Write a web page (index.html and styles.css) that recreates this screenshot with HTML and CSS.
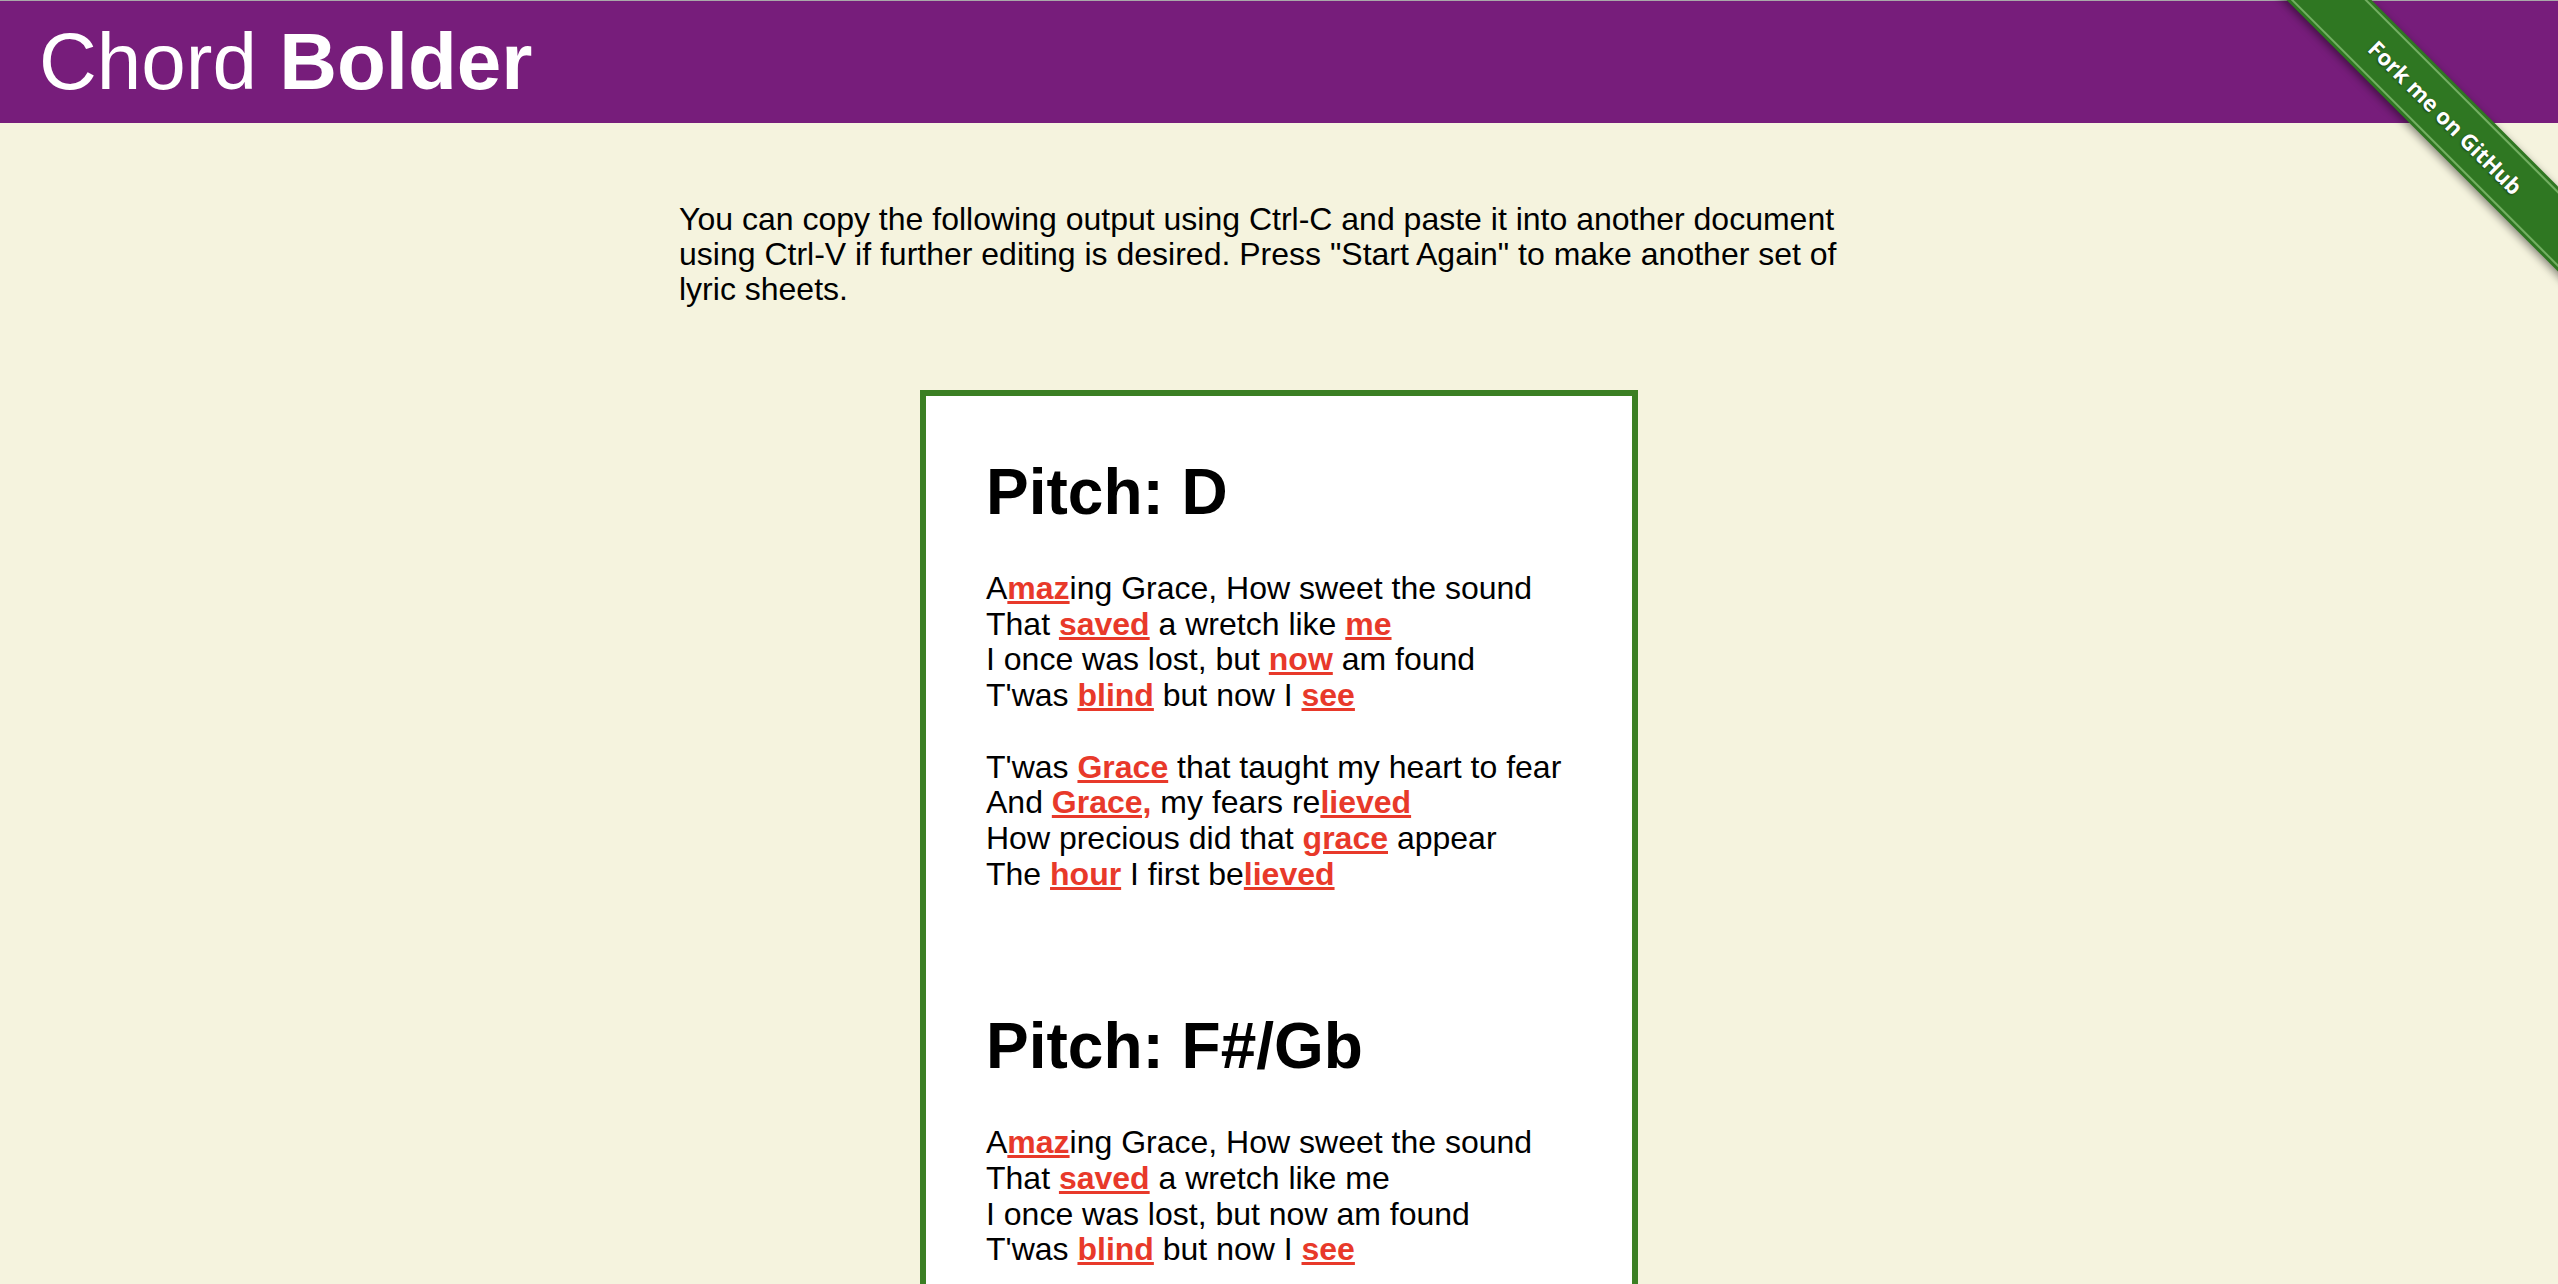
FILE: index.html
```html
<!DOCTYPE html>
<html lang="en">
<head>
<meta charset="utf-8">
<title>Chord Bolder</title>
<link rel="stylesheet" href="styles.css">
</head>
<body>
<header class="site-header">
  <h1 class="brand">Chord <b>Bolder</b></h1>
</header>
<a class="ribbon" href="#"><span class="ribbon-band">Fork me on GitHub</span></a>
<main class="content">
  <p class="intro">You can copy the following output using Ctrl-C and paste it into another document using Ctrl-V if further editing is desired. Press "Start Again" to make another set of lyric sheets.</p>
  <div class="sheet">
    <section class="song">
      <h1 class="pitch">Pitch: D</h1>
      <div class="lyrics">
        <div class="line">A<span class="hl">maz</span>ing Grace, How sweet the sound</div>
        <div class="line">That <span class="hl">saved</span> a wretch like <span class="hl">me</span></div>
        <div class="line">I once was lost, but <span class="hl">now</span> am found</div>
        <div class="line">T'was <span class="hl">blind</span> but now I <span class="hl">see</span></div>
        <div class="line blank">&nbsp;</div>
        <div class="line">T'was <span class="hl">Grace</span> that taught my heart to fear</div>
        <div class="line">And <span class="hl">Grace,</span> my fears re<span class="hl">lieved</span></div>
        <div class="line">How precious did that <span class="hl">grace</span> appear</div>
        <div class="line">The <span class="hl">hour</span> I first be<span class="hl">lieved</span></div>
      </div>
    </section>
    <section class="song">
      <h1 class="pitch">Pitch: F#/Gb</h1>
      <div class="lyrics">
        <div class="line">A<span class="hl">maz</span>ing Grace, How sweet the sound</div>
        <div class="line">That <span class="hl">saved</span> a wretch like me</div>
        <div class="line">I once was lost, but now am found</div>
        <div class="line">T'was <span class="hl">blind</span> but now I <span class="hl">see</span></div>
        <div class="line blank">&nbsp;</div>
        <div class="line">T'was <span class="hl">Grace</span> that taught my heart to fear</div>
        <div class="line">And <span class="hl">Grace,</span> my fears re<span class="hl">lieved</span></div>
        <div class="line">How precious did that <span class="hl">grace</span> appear</div>
        <div class="line">The <span class="hl">hour</span> I first be<span class="hl">lieved</span></div>
      </div>
    </section>
  </div>
</main>
</body>
</html>
```
FILE: styles.css
```css
html, body {
  margin: 0;
  padding: 0;
}

body {
  background: #f5f3de;
  color: #000;
  font-family: "Liberation Sans", Arial, sans-serif;
  font-size: 32px;
  overflow: hidden;
}

.site-header {
  background: #771d7b;
  border-top: 1px solid #a9a9a9;
  padding: 15px 39px;
}

.brand {
  margin: 0;
  font-size: 80px;
  line-height: 92px;
  font-weight: normal;
  color: #fff;
}

.brand b {
  font-weight: bold;
}

.ribbon {
  position: absolute;
  top: 0;
  right: 0;
  width: 300px;
  height: 300px;
  overflow: hidden;
  text-decoration: none;
}

.ribbon-band {
  position: absolute;
  left: -22px;
  top: 87px;
  width: 420px;
  height: 60px;
  box-sizing: border-box;
  transform: rotate(45deg);
  background: #2f7722;
  color: #fff;
  font-family: "Open Sans", "DejaVu Sans", sans-serif;
  font-weight: 700;
  font-size: 22px;
  line-height: 60px;
  text-align: center;
  text-shadow: 0 1px 2px rgba(0, 0, 0, 0.5);
  box-shadow: 0 3px 8px rgba(0, 0, 0, 0.45);
}

.ribbon-band::before,
.ribbon-band::after {
  content: "";
  position: absolute;
  left: 0;
  right: 0;
  height: 2px;
  background: rgba(170, 220, 150, 0.55);
}

.ribbon-band::before {
  top: 3px;
}

.ribbon-band::after {
  bottom: 3px;
}

.content {
  width: 1200px;
  margin: 0 auto;
  padding-top: 79px;
}

.intro {
  margin: 0 0 83px;
  line-height: 35px;
}

.sheet {
  width: 718px;
  box-sizing: border-box;
  margin: 0 auto;
  background: #fff;
  border: 6px solid #3b7f23;
  padding: 16px 60px 0;
}

.pitch {
  margin: 43px 0 42px;
  font-size: 64px;
  font-weight: bold;
  line-height: normal;
}

.lyrics {
  line-height: 35.7px;
  padding-bottom: 74px;
}

.hl {
  color: #e8392a;
  font-weight: bold;
  text-decoration: underline;
  text-decoration-color: #e8392a;
}
```
